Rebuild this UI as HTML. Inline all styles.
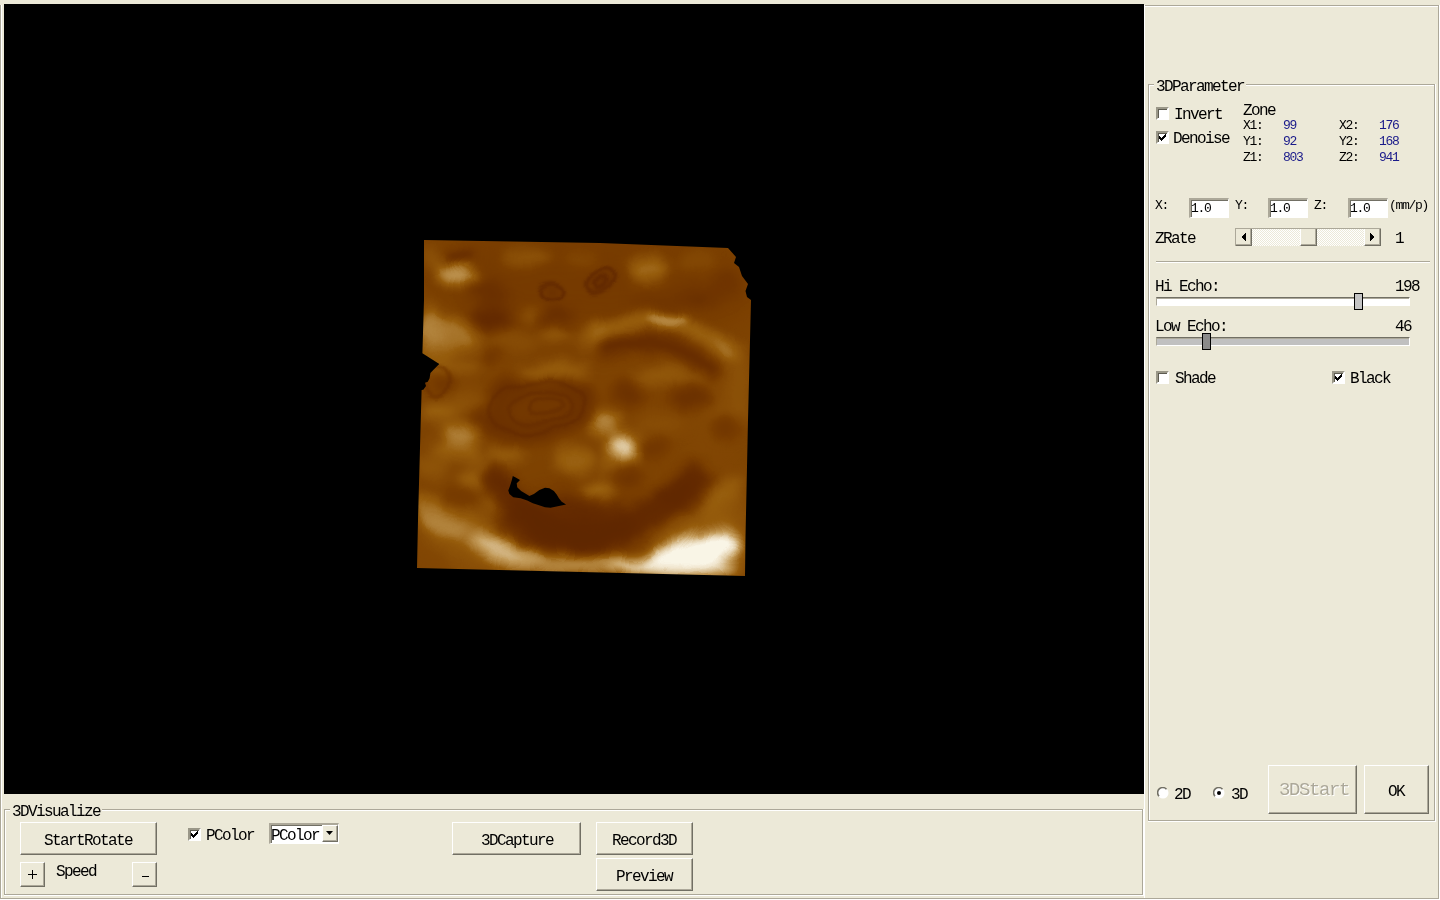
<!DOCTYPE html>
<html><head><meta charset="utf-8"><style>
html,body{margin:0;padding:0;}
body{width:1440px;height:900px;overflow:hidden;position:relative;background:#ECE9D8;font-family:"Liberation Mono",monospace;}
body>div,body>span,body>svg{position:absolute;display:block;}
body>span{white-space:pre;will-change:transform;}
</style></head><body>
<div style="left:0px;top:5px;width:1px;height:894px;background:#ACA899"></div>
<div style="left:1px;top:5px;width:1px;height:893px;background:#FFFFFF"></div>
<div style="left:0px;top:898px;width:1439px;height:1px;background:#ACA899"></div>
<div style="left:0px;top:899px;width:1440px;height:1px;background:#FFFFFF"></div>
<div style="left:1438px;top:5px;width:1px;height:894px;background:#ACA899"></div>
<div style="left:1439px;top:5px;width:1px;height:895px;background:#FFFFFF"></div>
<div style="left:1144px;top:5px;width:295px;height:1px;background:#ACA899"></div>
<div style="left:1144px;top:6px;width:294px;height:1px;background:#FFFFFF"></div>
<div style="left:1144px;top:5px;width:1px;height:893px;background:#FFFFFF"></div>
<div style="left:4px;top:4px;width:1140px;height:790px;background:#000"></div>
<div style="left:1148px;top:84px;width:286px;height:1px;background:#ACA899"></div>
<div style="left:1149px;top:85px;width:285px;height:1px;background:#FFFFFF"></div>
<div style="left:1148px;top:84px;width:1px;height:736px;background:#ACA899"></div>
<div style="left:1149px;top:85px;width:1px;height:735px;background:#FFFFFF"></div>
<div style="left:1148px;top:820px;width:287px;height:1px;background:#ACA899"></div>
<div style="left:1148px;top:821px;width:288px;height:1px;background:#FFFFFF"></div>
<div style="left:1434px;top:84px;width:1px;height:737px;background:#ACA899"></div>
<div style="left:1435px;top:84px;width:1px;height:738px;background:#FFFFFF"></div>
<div style="left:1154px;top:78px;width:92px;height:14px;background:#ECE9D8"></div>
<span style="left:1156px;top:78.74px;font-size:16px;line-height:16px;letter-spacing:-1.60px;color:#000;">3DParameter</span>
<div style="left:1156px;top:107px;width:9px;height:9px;background:#fff;border-top:2px solid #9a9788;border-left:2px solid #9a9788;border-right:2px solid #fff;border-bottom:2px solid #fff;box-shadow:inset 1px 1px 0 #5d5b50"></div>
<span style="left:1174px;top:106.74px;font-size:16px;line-height:16px;letter-spacing:-1.60px;color:#000;">Invert</span>
<div style="left:1156px;top:131px;width:9px;height:9px;background:#fff;border-top:2px solid #9a9788;border-left:2px solid #9a9788;border-right:2px solid #fff;border-bottom:2px solid #fff;box-shadow:inset 1px 1px 0 #5d5b50"></div>
<svg style="left:1159px;top:134px" width="7" height="7" viewBox="0 0 7 7" shape-rendering="crispEdges"><path d="M6 0h1v1h-1zM5 1h2v1h-2zM0 2h1v1h-1zM4 2h3v1h-3zM0 3h2v1h-2zM3 3h3v1h-3zM0 4h5v1h-5zM1 5h3v1h-3zM2 6h1v1h-1z" fill="#000"/></svg>
<span style="left:1173px;top:131.24px;font-size:16px;line-height:16px;letter-spacing:-1.60px;color:#000;">Denoise</span>
<span style="left:1243px;top:102.74px;font-size:16px;line-height:16px;letter-spacing:-1.60px;color:#000;">Zone</span>
<span style="left:1243px;top:119.04px;font-size:13px;line-height:13px;letter-spacing:-1.30px;color:#000;">X1:</span>
<span style="left:1283px;top:119.04px;font-size:13px;line-height:13px;letter-spacing:-1.30px;color:#1a1a8a;">99</span>
<span style="left:1339px;top:119.04px;font-size:13px;line-height:13px;letter-spacing:-1.30px;color:#000;">X2:</span>
<span style="left:1379px;top:119.04px;font-size:13px;line-height:13px;letter-spacing:-1.30px;color:#1a1a8a;">176</span>
<span style="left:1243px;top:135.04px;font-size:13px;line-height:13px;letter-spacing:-1.30px;color:#000;">Y1:</span>
<span style="left:1283px;top:135.04px;font-size:13px;line-height:13px;letter-spacing:-1.30px;color:#1a1a8a;">92</span>
<span style="left:1339px;top:135.04px;font-size:13px;line-height:13px;letter-spacing:-1.30px;color:#000;">Y2:</span>
<span style="left:1379px;top:135.04px;font-size:13px;line-height:13px;letter-spacing:-1.30px;color:#1a1a8a;">168</span>
<span style="left:1243px;top:151.04px;font-size:13px;line-height:13px;letter-spacing:-1.30px;color:#000;">Z1:</span>
<span style="left:1283px;top:151.04px;font-size:13px;line-height:13px;letter-spacing:-1.30px;color:#1a1a8a;">803</span>
<span style="left:1339px;top:151.04px;font-size:13px;line-height:13px;letter-spacing:-1.30px;color:#000;">Z2:</span>
<span style="left:1379px;top:151.04px;font-size:13px;line-height:13px;letter-spacing:-1.30px;color:#1a1a8a;">941</span>
<span style="left:1155px;top:199.04px;font-size:13px;line-height:13px;letter-spacing:-1.30px;color:#000;">X:</span>
<div style="left:1189px;top:198px;width:37px;height:17px;background:#fff;border-top:2px solid #ACA899;border-left:2px solid #ACA899;border-right:1px solid #fff;border-bottom:1px solid #fff;box-shadow:inset 1px 1px 0 #716F64"></div>
<span style="left:1191px;top:201.54px;font-size:13px;line-height:13px;letter-spacing:-1.30px;color:#000;">1.0</span>
<span style="left:1235px;top:199.04px;font-size:13px;line-height:13px;letter-spacing:-1.30px;color:#000;">Y:</span>
<div style="left:1268px;top:198px;width:37px;height:17px;background:#fff;border-top:2px solid #ACA899;border-left:2px solid #ACA899;border-right:1px solid #fff;border-bottom:1px solid #fff;box-shadow:inset 1px 1px 0 #716F64"></div>
<span style="left:1270px;top:201.54px;font-size:13px;line-height:13px;letter-spacing:-1.30px;color:#000;">1.0</span>
<span style="left:1314px;top:199.04px;font-size:13px;line-height:13px;letter-spacing:-1.30px;color:#000;">Z:</span>
<div style="left:1348px;top:198px;width:37px;height:17px;background:#fff;border-top:2px solid #ACA899;border-left:2px solid #ACA899;border-right:1px solid #fff;border-bottom:1px solid #fff;box-shadow:inset 1px 1px 0 #716F64"></div>
<span style="left:1350px;top:201.54px;font-size:13px;line-height:13px;letter-spacing:-1.30px;color:#000;">1.0</span>
<span style="left:1389px;top:198.54px;font-size:13px;line-height:13px;letter-spacing:-1.30px;color:#000;">(mm/p)</span>
<span style="left:1155px;top:230.74px;font-size:16px;line-height:16px;letter-spacing:-1.60px;color:#000;">ZRate</span>
<div style="left:1235px;top:228px;width:146px;height:18px;background-color:#f4f3ee;background-image:repeating-conic-gradient(#ECE9D8 0 25%, #fff 0 50%);background-size:2px 2px"></div>
<div style="left:1235px;top:228px;width:15px;height:16px;background:#ECE9D8;border-top:1px solid #fff;border-left:1px solid #fff;border-right:1px solid #716F64;border-bottom:1px solid #716F64;box-shadow:inset -1px -1px 0 #ACA899"></div>
<div style="left:1364px;top:228px;width:15px;height:16px;background:#ECE9D8;border-top:1px solid #fff;border-left:1px solid #fff;border-right:1px solid #716F64;border-bottom:1px solid #716F64;box-shadow:inset -1px -1px 0 #ACA899"></div>
<div style="left:1300px;top:228px;width:15px;height:16px;background:#ECE9D8;border-top:1px solid #fff;border-left:1px solid #fff;border-right:1px solid #716F64;border-bottom:1px solid #716F64;box-shadow:inset -1px -1px 0 #ACA899"></div>
<svg style="left:1242px;top:233px" width="4" height="8" viewBox="0 0 4 8" shape-rendering="crispEdges"><path d="M4 0 V8 H3 V7 H2 V6 H1 V5 H0 V3 H1 V2 H2 V1 H3 V0Z" fill="#000"/></svg>
<svg style="left:1370px;top:233px" width="4" height="8" viewBox="0 0 4 8" shape-rendering="crispEdges"><path d="M0 0 V8 H1 V7 H2 V6 H3 V5 H4 V3 H3 V2 H2 V1 H1 V0Z" fill="#000"/></svg>
<div style="left:1235px;top:228px;width:146px;height:1px;background:#ACA899"></div>
<div style="left:1235px;top:228px;width:1px;height:18px;background:#ACA899"></div>
<span style="left:1395px;top:230.74px;font-size:16px;line-height:16px;letter-spacing:-1.60px;color:#000;">1</span>
<div style="left:1156px;top:261px;width:274px;height:1px;background:#ACA899"></div>
<div style="left:1156px;top:262px;width:274px;height:1px;background:#FFFFFF"></div>
<span style="left:1155px;top:279.24px;font-size:16px;line-height:16px;letter-spacing:-1.60px;color:#000;">Hi&nbsp;Echo:</span>
<span style="left:1395px;top:278.74px;font-size:16px;line-height:16px;letter-spacing:-1.60px;color:#000;">198</span>
<div style="left:1156px;top:297px;width:252px;height:7px;background:#fff;border-top:1px solid #716F64;border-left:1px solid #ACA899;border-right:1px solid #fff;border-bottom:1px solid #fff;box-shadow:inset 0 1px 0 #ACA899"></div>
<div style="left:1354px;top:293px;width:7px;height:15px;background:#c4c4c4;border:1px solid #000"></div>
<span style="left:1155px;top:318.74px;font-size:16px;line-height:16px;letter-spacing:-1.60px;color:#000;">Low&nbsp;Echo:</span>
<span style="left:1395px;top:318.74px;font-size:16px;line-height:16px;letter-spacing:-1.60px;color:#000;">46</span>
<div style="left:1156px;top:337px;width:252px;height:7px;background:#c0c0c0;border-top:1px solid #716F64;border-left:1px solid #ACA899;border-right:1px solid #fff;border-bottom:1px solid #fff;box-shadow:inset 0 1px 0 #ACA899"></div>
<div style="left:1202px;top:333px;width:7px;height:15px;background:#8a8a8a;border:1px solid #000"></div>
<div style="left:1156px;top:371px;width:9px;height:9px;background:#fff;border-top:2px solid #9a9788;border-left:2px solid #9a9788;border-right:2px solid #fff;border-bottom:2px solid #fff;box-shadow:inset 1px 1px 0 #5d5b50"></div>
<span style="left:1175px;top:371.24px;font-size:16px;line-height:16px;letter-spacing:-1.60px;color:#000;">Shade</span>
<div style="left:1332px;top:371px;width:9px;height:9px;background:#fff;border-top:2px solid #9a9788;border-left:2px solid #9a9788;border-right:2px solid #fff;border-bottom:2px solid #fff;box-shadow:inset 1px 1px 0 #5d5b50"></div>
<svg style="left:1335px;top:374px" width="7" height="7" viewBox="0 0 7 7" shape-rendering="crispEdges"><path d="M6 0h1v1h-1zM5 1h2v1h-2zM0 2h1v1h-1zM4 2h3v1h-3zM0 3h2v1h-2zM3 3h3v1h-3zM0 4h5v1h-5zM1 5h3v1h-3zM2 6h1v1h-1z" fill="#000"/></svg>
<span style="left:1350px;top:371.24px;font-size:16px;line-height:16px;letter-spacing:-1.60px;color:#000;">Black</span>
<svg style="left:1157px;top:787px" width="12" height="12" viewBox="0 0 12 12"><circle cx="6" cy="6" r="5.5" fill="#fff"/><path d="M2 9.2 A4.8 4.8 0 0 1 9.5 2.2" stroke="#716F64" stroke-width="1.6" fill="none"/></svg>
<span style="left:1174px;top:787.24px;font-size:16px;line-height:16px;letter-spacing:-1.60px;color:#000;">2D</span>
<svg style="left:1213px;top:787px" width="12" height="12" viewBox="0 0 12 12"><circle cx="6" cy="6" r="5.5" fill="#fff"/><path d="M2 9.2 A4.8 4.8 0 0 1 9.5 2.2" stroke="#716F64" stroke-width="1.6" fill="none"/><circle cx="6" cy="6" r="2" fill="#000"/></svg>
<span style="left:1231px;top:787.24px;font-size:16px;line-height:16px;letter-spacing:-1.60px;color:#000;">3D</span>
<div style="left:1268px;top:765px;width:87px;height:47px;background:#ECE9D8;border-top:1px solid #fff;border-left:1px solid #fff;border-right:1px solid #716F64;border-bottom:1px solid #716F64;box-shadow:inset -1px -1px 0 #ACA899"></div>
<span style="left:1279px;top:780.94px;font-size:19px;line-height:19px;letter-spacing:-1.40px;color:#ACA899;text-shadow:1px 1px 0 #fff">3DStart</span>
<div style="left:1364px;top:765px;width:63px;height:47px;background:#ECE9D8;border-top:1px solid #fff;border-left:1px solid #fff;border-right:1px solid #716F64;border-bottom:1px solid #716F64;box-shadow:inset -1px -1px 0 #ACA899"></div>
<span style="left:1388px;top:783.74px;font-size:16px;line-height:16px;letter-spacing:-1.60px;color:#000;">OK</span>
<div style="left:4px;top:809px;width:1138px;height:1px;background:#ACA899"></div>
<div style="left:5px;top:810px;width:1137px;height:1px;background:#FFFFFF"></div>
<div style="left:4px;top:809px;width:1px;height:85px;background:#ACA899"></div>
<div style="left:5px;top:810px;width:1px;height:84px;background:#FFFFFF"></div>
<div style="left:4px;top:894px;width:1139px;height:1px;background:#ACA899"></div>
<div style="left:4px;top:895px;width:1140px;height:1px;background:#FFFFFF"></div>
<div style="left:1142px;top:809px;width:1px;height:86px;background:#ACA899"></div>
<div style="left:1143px;top:809px;width:1px;height:87px;background:#FFFFFF"></div>
<div style="left:10px;top:802px;width:92px;height:14px;background:#ECE9D8"></div>
<span style="left:12px;top:803.74px;font-size:16px;line-height:16px;letter-spacing:-1.60px;color:#000;">3DVisualize</span>
<div style="left:20px;top:822px;width:135px;height:31px;background:#ECE9D8;border-top:1px solid #fff;border-left:1px solid #fff;border-right:1px solid #716F64;border-bottom:1px solid #716F64;box-shadow:inset -1px -1px 0 #ACA899"></div>
<span style="left:44px;top:832.74px;font-size:16px;line-height:16px;letter-spacing:-1.60px;color:#000;">StartRotate</span>
<div style="left:20px;top:862px;width:23px;height:23px;background:#ECE9D8;border-top:1px solid #fff;border-left:1px solid #fff;border-right:1px solid #716F64;border-bottom:1px solid #716F64;box-shadow:inset -1px -1px 0 #ACA899"></div>
<svg style="left:27px;top:869px" width="11" height="11" viewBox="0 0 11 11"><path d="M5.5 1 V10 M1 5.5 H10" stroke="#000" stroke-width="1"/></svg>
<span style="left:56px;top:863.74px;font-size:16px;line-height:16px;letter-spacing:-1.60px;color:#000;">Speed</span>
<div style="left:132px;top:862px;width:23px;height:23px;background:#ECE9D8;border-top:1px solid #fff;border-left:1px solid #fff;border-right:1px solid #716F64;border-bottom:1px solid #716F64;box-shadow:inset -1px -1px 0 #ACA899"></div>
<div style="left:142px;top:876px;width:7px;height:1px;background:#000"></div>
<div style="left:188px;top:828px;width:9px;height:9px;background:#fff;border-top:2px solid #9a9788;border-left:2px solid #9a9788;border-right:2px solid #fff;border-bottom:2px solid #fff;box-shadow:inset 1px 1px 0 #5d5b50"></div>
<svg style="left:191px;top:831px" width="7" height="7" viewBox="0 0 7 7" shape-rendering="crispEdges"><path d="M6 0h1v1h-1zM5 1h2v1h-2zM0 2h1v1h-1zM4 2h3v1h-3zM0 3h2v1h-2zM3 3h3v1h-3zM0 4h5v1h-5zM1 5h3v1h-3zM2 6h1v1h-1z" fill="#000"/></svg>
<span style="left:206px;top:828.24px;font-size:16px;line-height:16px;letter-spacing:-1.60px;color:#000;">PColor</span>
<div style="left:269px;top:823px;width:67px;height:18px;background:#fff;border-top:2px solid #ACA899;border-left:2px solid #ACA899;border-right:1px solid #fff;border-bottom:1px solid #fff;box-shadow:inset 1px 1px 0 #716F64"></div>
<span style="left:271px;top:827.74px;font-size:16px;line-height:16px;letter-spacing:-1.60px;color:#000;">PColor</span>
<div style="left:322px;top:825px;width:14px;height:15px;background:#ECE9D8;border-top:1px solid #fff;border-left:1px solid #fff;border-right:1px solid #716F64;border-bottom:1px solid #716F64;box-shadow:inset -1px -1px 0 #ACA899"></div>
<svg style="left:326px;top:831px" width="8" height="5" viewBox="0 0 8 5"><path d="M0 0 H7 L3.5 4Z" fill="#000"/></svg>
<div style="left:452px;top:822px;width:127px;height:31px;background:#ECE9D8;border-top:1px solid #fff;border-left:1px solid #fff;border-right:1px solid #716F64;border-bottom:1px solid #716F64;box-shadow:inset -1px -1px 0 #ACA899"></div>
<span style="left:481px;top:832.74px;font-size:16px;line-height:16px;letter-spacing:-1.60px;color:#000;">3DCapture</span>
<div style="left:596px;top:822px;width:95px;height:31px;background:#ECE9D8;border-top:1px solid #fff;border-left:1px solid #fff;border-right:1px solid #716F64;border-bottom:1px solid #716F64;box-shadow:inset -1px -1px 0 #ACA899"></div>
<span style="left:612px;top:832.74px;font-size:16px;line-height:16px;letter-spacing:-1.60px;color:#000;">Record3D</span>
<div style="left:596px;top:858px;width:95px;height:31px;background:#ECE9D8;border-top:1px solid #fff;border-left:1px solid #fff;border-right:1px solid #716F64;border-bottom:1px solid #716F64;box-shadow:inset -1px -1px 0 #ACA899"></div>
<span style="left:616px;top:868.74px;font-size:16px;line-height:16px;letter-spacing:-1.60px;color:#000;">Preview</span>
<svg style="left:0;top:0" width="1440" height="900" viewBox="0 0 1440 900">
<defs>
<clipPath id="vc"><path d="M424 240 L600 243 L728 248 L736 257 L734 263 L739 267 L742 276 L748 284 L745.5 291 L747 297 L751 300 L748 420 L745.5 537 L745 576 L417 568 L418 520 L421.6 390 L423.3 389.8 L426 386 L425 382.7 L427.8 381.8 L429.6 378.2 L430.4 372.9 L434 369.3 L439.3 364 L422.4 353.3 L424 300 Z"/></clipPath>
<filter id="b0" filterUnits="userSpaceOnUse" x="300" y="150" width="560" height="520" color-interpolation-filters="sRGB"><feGaussianBlur stdDeviation="1.6"/></filter>
<filter id="b1" filterUnits="userSpaceOnUse" x="300" y="150" width="560" height="520" color-interpolation-filters="sRGB"><feGaussianBlur stdDeviation="3"/></filter>
<filter id="b2" filterUnits="userSpaceOnUse" x="300" y="150" width="560" height="520" color-interpolation-filters="sRGB"><feGaussianBlur stdDeviation="6"/></filter>
<filter id="b3" filterUnits="userSpaceOnUse" x="300" y="150" width="560" height="520" color-interpolation-filters="sRGB"><feGaussianBlur stdDeviation="18"/></filter>
<filter id="cm" filterUnits="userSpaceOnUse" x="300" y="150" width="560" height="520" color-interpolation-filters="sRGB"><feTurbulence type="fractalNoise" baseFrequency="0.035" numOctaves="2" seed="7" result="t"/><feDisplacementMap in="SourceGraphic" in2="t" scale="9" xChannelSelector="R" yChannelSelector="G" result="d"/><feComponentTransfer in="d" result="c"><feFuncR type="linear" slope="1.12" intercept="-0.053"/><feFuncG type="linear" slope="1.12" intercept="-0.053"/><feFuncB type="linear" slope="1.12" intercept="-0.053"/></feComponentTransfer><feComponentTransfer in="c"><feFuncR type="table" tableValues="0.314 0.392 0.478 0.588 0.765 0.980"/><feFuncG type="table" tableValues="0.118 0.165 0.243 0.361 0.608 0.961"/><feFuncB type="table" tableValues="0.000 0.000 0.000 0.047 0.353 0.902"/></feComponentTransfer></filter>
</defs>
<g clip-path="url(#vc)"><g filter="url(#cm)">
<rect x="400" y="230" width="360" height="360" fill="rgb(112,112,112)"/>
<g filter="url(#b3)">
<ellipse cx="585" cy="285" rx="175" ry="50" fill="rgb(92,92,92)" opacity="0.8"/>
<ellipse cx="575" cy="530" rx="65" ry="30" fill="rgb(51,51,51)" opacity="0.7"/>
<ellipse cx="695" cy="556" rx="45" ry="20" fill="rgb(230,230,230)" opacity="0.9" transform="rotate(-15 695 556)"/>
<ellipse cx="725" cy="512" rx="25" ry="22" fill="rgb(158,158,158)" opacity="0.7"/>
<ellipse cx="470" cy="540" rx="50" ry="25" fill="rgb(166,166,166)" opacity="0.7" transform="rotate(20 470 540)"/>
<ellipse cx="715" cy="410" rx="30" ry="50" fill="rgb(128,128,128)" opacity="0.5"/>
<ellipse cx="432" cy="335" rx="18" ry="35" fill="rgb(158,158,158)" opacity="0.7"/>
</g>
<g filter="url(#b2)">
<ellipse cx="456" cy="274" rx="21.0" ry="11.2" fill="rgb(191,191,191)" opacity="1" transform="rotate(10 456 274)"/>
<ellipse cx="432" cy="257" rx="11.2" ry="9.8" fill="rgb(140,140,140)" opacity="0.8"/>
<ellipse cx="527" cy="257" rx="25.2" ry="9.8" fill="rgb(143,143,143)" opacity="0.8"/>
<ellipse cx="580" cy="259" rx="16.8" ry="8.4" fill="rgb(128,128,128)" opacity="0.6"/>
<ellipse cx="648" cy="269" rx="21.0" ry="14.0" fill="rgb(163,163,163)" opacity="0.9"/>
<ellipse cx="697" cy="262" rx="21.0" ry="9.8" fill="rgb(133,133,133)" opacity="0.6"/>
<ellipse cx="446" cy="333" rx="33.6" ry="15.4" fill="rgb(173,173,173)" opacity="0.95" transform="rotate(10 446 333)"/>
<ellipse cx="592" cy="338" rx="16.8" ry="14.0" fill="rgb(143,143,143)" opacity="0.7"/>
<ellipse cx="513" cy="340" rx="25.2" ry="11.2" fill="rgb(133,133,133)" opacity="0.7"/>
<ellipse cx="460" cy="256" rx="17.5" ry="7.5" fill="rgb(76,76,76)" opacity="0.7"/>
<ellipse cx="488" cy="291" rx="17.5" ry="12.5" fill="rgb(69,69,69)" opacity="0.8"/>
<ellipse cx="490" cy="320" rx="22.5" ry="12.5" fill="rgb(51,51,51)" opacity="0.85"/>
<ellipse cx="556" cy="318" rx="17.5" ry="11.2" fill="rgb(61,61,61)" opacity="0.8"/>
<ellipse cx="697" cy="296" rx="20.0" ry="10.0" fill="rgb(76,76,76)" opacity="0.7"/>
<ellipse cx="726" cy="284" rx="15.0" ry="12.5" fill="rgb(76,76,76)" opacity="0.7"/>
<ellipse cx="433" cy="352" rx="19.6" ry="11.2" fill="rgb(153,153,153)" opacity="0.8"/>
<ellipse cx="563" cy="373" rx="25.2" ry="8.4" fill="rgb(163,163,163)" opacity="0.9"/>
<ellipse cx="461" cy="435" rx="19.6" ry="11.2" fill="rgb(168,168,168)" opacity="0.9"/>
<ellipse cx="444" cy="413" rx="21.0" ry="8.4" fill="rgb(143,143,143)" opacity="0.7"/>
<ellipse cx="604" cy="423" rx="14.0" ry="11.2" fill="rgb(184,184,184)" opacity="0.95"/>
<ellipse cx="624" cy="447" rx="18.2" ry="14.0" fill="rgb(219,219,219)" opacity="1"/>
<ellipse cx="678" cy="374" rx="35.0" ry="9.8" fill="rgb(133,133,133)" opacity="0.7"/>
<ellipse cx="726" cy="352" rx="14.0" ry="11.2" fill="rgb(153,153,153)" opacity="0.8"/>
<ellipse cx="730" cy="415" rx="21.0" ry="14.0" fill="rgb(133,133,133)" opacity="0.7"/>
<ellipse cx="659" cy="425" rx="25.2" ry="9.8" fill="rgb(133,133,133)" opacity="0.7"/>
<ellipse cx="534" cy="408" rx="62.5" ry="35.0" fill="rgb(66,66,66)" opacity="0.75" transform="rotate(-8 534 408)"/>
<ellipse cx="538" cy="408" rx="32.5" ry="16.2" fill="rgb(97,97,97)" opacity="0.7" transform="rotate(-8 538 408)"/>
<ellipse cx="629" cy="394" rx="17.5" ry="12.5" fill="rgb(69,69,69)" opacity="0.8"/>
<ellipse cx="690" cy="398" rx="22.5" ry="12.5" fill="rgb(66,66,66)" opacity="0.8"/>
<ellipse cx="726" cy="428" rx="15.0" ry="12.5" fill="rgb(76,76,76)" opacity="0.7"/>
<ellipse cx="653" cy="447" rx="15.0" ry="10.0" fill="rgb(76,76,76)" opacity="0.7"/>
<ellipse cx="442" cy="380" rx="12.5" ry="15.0" fill="rgb(76,76,76)" opacity="0.7"/>
<ellipse cx="431" cy="467" rx="16.8" ry="11.2" fill="rgb(143,143,143)" opacity="0.8"/>
<ellipse cx="483" cy="472" rx="16.8" ry="11.2" fill="rgb(143,143,143)" opacity="0.8"/>
<ellipse cx="597" cy="492" rx="16.8" ry="11.2" fill="rgb(163,163,163)" opacity="0.9"/>
<ellipse cx="612" cy="465" rx="14.0" ry="8.4" fill="rgb(153,153,153)" opacity="0.8"/>
<ellipse cx="450" cy="520" rx="44.8" ry="15.4" fill="rgb(163,163,163)" opacity="0.9" transform="rotate(25 450 520)"/>
<ellipse cx="507" cy="551" rx="39.2" ry="14.0" fill="rgb(204,204,204)" opacity="1" transform="rotate(20 507 551)"/>
<ellipse cx="574" cy="565" rx="77.0" ry="9.8" fill="rgb(189,189,189)" opacity="0.95"/>
<ellipse cx="692" cy="553" rx="50.4" ry="15.4" fill="rgb(245,245,245)" opacity="1" transform="rotate(-15 692 553)"/>
<ellipse cx="672" cy="567" rx="67.2" ry="8.4" fill="rgb(237,237,237)" opacity="0.95"/>
<ellipse cx="720" cy="498" rx="28.0" ry="11.2" fill="rgb(158,158,158)" opacity="0.8" transform="rotate(-40 720 498)"/>
<ellipse cx="431" cy="328" rx="11.2" ry="19.6" fill="rgb(178,178,178)" opacity="0.9"/>
<ellipse cx="460" cy="343" rx="22.4" ry="8.4" fill="rgb(163,163,163)" opacity="0.85"/>
<ellipse cx="531" cy="314" rx="11.2" ry="5.6" fill="rgb(153,153,153)" opacity="0.8"/>
<ellipse cx="555" cy="334" rx="15.4" ry="8.4" fill="rgb(153,153,153)" opacity="0.8"/>
<ellipse cx="545" cy="373" rx="28.0" ry="7.0" fill="rgb(163,163,163)" opacity="0.85"/>
<ellipse cx="453" cy="367" rx="28.0" ry="7.0" fill="rgb(153,153,153)" opacity="0.8"/>
<ellipse cx="470" cy="400" rx="21.0" ry="11.2" fill="rgb(140,140,140)" opacity="0.7"/>
<ellipse cx="500" cy="298" rx="11.2" ry="8.8" fill="rgb(69,69,69)" opacity="0.8"/>
<ellipse cx="493" cy="356" rx="7.5" ry="6.2" fill="rgb(64,64,64)" opacity="0.8"/>
<ellipse cx="700" cy="304" rx="10.0" ry="7.5" fill="rgb(66,66,66)" opacity="0.8"/>
<ellipse cx="678" cy="300" rx="50.0" ry="7.5" fill="rgb(76,76,76)" opacity="0.6"/>
<ellipse cx="660" cy="376" rx="28.0" ry="7.0" fill="rgb(153,153,153)" opacity="0.8"/>
<ellipse cx="740" cy="380" rx="11.2" ry="35.0" fill="rgb(140,140,140)" opacity="0.7"/>
<ellipse cx="629" cy="477" rx="15.0" ry="11.2" fill="rgb(76,76,76)" opacity="0.8"/>
<ellipse cx="683" cy="496" rx="25.0" ry="15.0" fill="rgb(71,71,71)" opacity="0.8"/>
<ellipse cx="461" cy="498" rx="20.0" ry="13.8" fill="rgb(87,87,87)" opacity="0.7"/>
<ellipse cx="433" cy="562" rx="16.8" ry="12.6" fill="rgb(115,115,115)" opacity="0.6"/>
<ellipse cx="565" cy="525" rx="68.8" ry="27.5" fill="rgb(46,46,46)" opacity="0.6"/>
<ellipse cx="460" cy="435" rx="22.4" ry="7.0" fill="rgb(178,178,178)" opacity="0.9" transform="rotate(15 460 435)"/>
<ellipse cx="438" cy="411" rx="16.8" ry="7.0" fill="rgb(163,163,163)" opacity="0.9"/>
<ellipse cx="455" cy="451" rx="28.0" ry="7.0" fill="rgb(163,163,163)" opacity="0.9" transform="rotate(10 455 451)"/>
<ellipse cx="476" cy="482" rx="19.6" ry="7.0" fill="rgb(168,168,168)" opacity="0.9" transform="rotate(15 476 482)"/>
<ellipse cx="505" cy="455" rx="18.2" ry="7.0" fill="rgb(158,158,158)" opacity="0.9"/>
<ellipse cx="441" cy="524" rx="28.0" ry="8.4" fill="rgb(184,184,184)" opacity="0.9" transform="rotate(20 441 524)"/>
<ellipse cx="498" cy="502" rx="14.0" ry="8.4" fill="rgb(158,158,158)" opacity="0.9"/>
<ellipse cx="575" cy="460" rx="19.6" ry="12.6" fill="rgb(158,158,158)" opacity="0.9"/>
<ellipse cx="500" cy="552" rx="22.4" ry="8.4" fill="rgb(209,209,209)" opacity="0.9" transform="rotate(25 500 552)"/>
</g>
<g filter="url(#b1)">
<ellipse cx="551" cy="292" rx="9" ry="6" fill="rgb(71,71,71)" opacity="0.8"/>
<ellipse cx="600" cy="281" rx="12" ry="7" fill="rgb(71,71,71)" opacity="0.8" transform="rotate(-35 600 281)"/>
<ellipse cx="460" cy="256" rx="14" ry="5" fill="rgb(64,64,64)" opacity="0.8"/>
<ellipse cx="668" cy="320" rx="22" ry="5" fill="rgb(204,204,204)" opacity="0.9" transform="rotate(3 668 320)"/>
</g>
<g filter="url(#b0)" fill="none" stroke="rgb(41,41,41)" stroke-width="3">
<ellipse cx="600" cy="281" rx="15" ry="9" opacity="0.8" transform="rotate(-35 600 281)"/>
<ellipse cx="600" cy="282" rx="7" ry="4" opacity="0.8" transform="rotate(-35 600 282)"/>
<ellipse cx="551" cy="292" rx="12" ry="8" opacity="0.8"/>
<ellipse cx="536" cy="408" rx="48" ry="25" opacity="0.42" transform="rotate(-8 536 408)"/>
<ellipse cx="540" cy="408" rx="32" ry="16" opacity="0.42" transform="rotate(-8 540 408)"/>
<ellipse cx="546" cy="406" rx="17" ry="8" opacity="0.42" transform="rotate(-8 546 406)"/>
<ellipse cx="436" cy="381" rx="12" ry="16" opacity="0.42"/>
</g>
<g filter="url(#b2)" fill="none" stroke="rgb(46,46,46)" opacity="0.8"><path d="M488 470 Q575 605 705 468" stroke-width="28"/></g>
<g filter="url(#b2)" fill="none"><path d="M590 334 Q668 300 736 356" stroke="rgb(178,178,178)" stroke-width="12" opacity="0.85"/><path d="M598 354 Q660 322 718 374" stroke="rgb(46,46,46)" stroke-width="14" opacity="0.85"/></g>
<g filter="url(#b1)" fill="none" stroke="rgb(51,51,51)" stroke-width="1.6" opacity="0.45"><path d="M495 470 Q575 590 690 475"/><path d="M515 500 Q580 570 665 495"/></g>
</g></g>
<path d="M512.8 476.1 L516.1 477.8 L520.0 480.0 L518.3 481.7 L516.7 483.3 L517.2 487.2 L521.1 491.1 L526.1 493.9 L529.4 496.1 L533.9 493.9 L539.4 490.0 L545.0 487.8 L549.4 488.3 L553.9 491.1 L556.7 494.4 L558.9 498.3 L561.7 501.7 L566.1 504.4 L558.9 506.1 L550.6 507.8 L545.0 507.2 L538.3 505.0 L532.8 503.3 L527.2 500.6 L520.6 498.3 L513.3 497.2 L509.4 493.9 L508.3 490.6 L510.0 486.1 L511.7 480.6Z" fill="#000"/>
</svg>
</body></html>
